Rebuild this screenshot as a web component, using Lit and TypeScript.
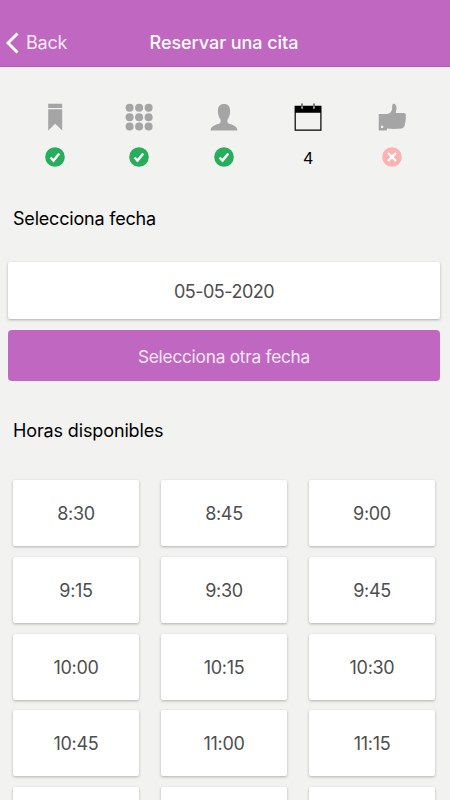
import { LitElement, html, css, svg } from "lit";
import { customElement } from "lit/decorators.js";

const ICONS = {
  bookmark: svg`<path d="M7.200 .8h14v4.300h-14z M7.200 6.300h14V27.500l-7-6.800-7 6.800z"/>`,
  grid: svg`${[4.8, 14.2, 23.6].map((y) => [4.6, 14.1, 23.6].map((x) => svg`<circle cx=${x} cy=${y} r="4"/>`))}`,
  person: svg`<path d="M14 .9c4 0 6.200 2.400 6.100 6.900 0 3.300-.8 6.200-2.400 8.500-.7 1.600-.5 3.700.8 4.300 2.500 1.200 8.500 1.800 9 6.900H.5c.5-5.100 6.500-5.700 9-6.900 1.300-.6 1.500-2.700.8-4.300C8.700 14 7.900 11.100 7.900 7.800 7.800 3.300 10 .9 14 .9z"/>`,
  calendar: svg`<path d="M.6 2.800h6.600v2.700h1.700V2.800h10.200v2.700h1.700V2.800h6.700v25H.6z M1.800 9.700v16.900h24.500V9.700z" fill-rule="evenodd"/><path d="M7.500.6h1v4h-1z M19.500.6h1v4h-1z"/>`,
  thumb: svg`<path fill-rule="evenodd" d="M.7 11h8.300c3-.3 4.900-2.400 5.100-5.200.1-2.500.1-5.100 1.500-5.100 1.900 0 3 2 2.900 4.600-.1 1.900-.7 3.100-.7 4.600h8c2.300 0 2.500 2.300 1.700 3.400.6 1.300.5 2.600 0 3.500.2 1.400.1 2.700-.6 3.500.1 3-1.200 5.200-3.500 5.300-5.300.4-10.200.4-14.400 0v1.900H.7z M3 22.800v2.200h2.200v-2.200z"/>`,
};

type IconName = keyof typeof ICONS;
type Status = "done" | "current" | "pending";

const STEPS: { icon: IconName; status: Status }[] = [
  { icon: "bookmark", status: "done" },
  { icon: "grid", status: "done" },
  { icon: "person", status: "done" },
  { icon: "calendar", status: "current" },
  { icon: "thumb", status: "pending" },
];

const HOURS = [
  "8:30", "8:45", "9:00",
  "9:15", "9:30", "9:45",
  "10:00", "10:15", "10:30",
  "10:45", "11:00", "11:15",
  "", "", "",
];

@customElement("app-root")
export class AppRoot extends LitElement {
  static styles = css`
    :host {
      display: flex;
      flex-direction: column;
      height: 800px;
      overflow: hidden;
      background: #f2f2f1;
      color: #000;
      font-family: Inter, "Liberation Sans", sans-serif;
      font-size: 18px;
      letter-spacing: -0.2px;
    }
    * { box-sizing: border-box; }
    .header {
      flex: none;
      height: 67px;
      padding: 19px 8px 0 6px;
      background: #c067c1;
      border-bottom: 1px solid #b85bbb;
      color: #fbeafb;
      display: grid;
      grid-template-columns: 1fr auto 1fr;
      align-items: center;
    }
    .back { display: flex; align-items: center; gap: 7px; }
    .chevron { width: 13px; height: 22px; fill: none; stroke: #fff; stroke-width: 3; }
    .title { color: #fff; font-weight: 500; font-size: 18px; letter-spacing: -0.05px; }
    .steps { flex: none; display: flex; height: 104px; padding: 36px 15.5px 0 13px; }
    .step { flex: 1; display: flex; flex-direction: column; align-items: center; gap: 16px; }
    .icon { width: 28px; height: 28px; fill: #a5a5a5; }
    .current .icon { fill: #000; }
    .mark { width: 20px; height: 20px; display: block; }
    .tick { fill: none; stroke: #fff; stroke-width: 2.4; }
    .number { height: 20px; line-height: 22px; font-size: 16px; }
    .heading { flex: none; margin: 0; padding-left: 13px; font-size: 18px; font-weight: 400; line-height: 24px; }
    .first { margin-top: 36px; }
    .second { margin-top: 38px; letter-spacing: -0.13px; }
    .card {
      display: flex;
      align-items: center;
      justify-content: center;
      padding-top: 1px;
      background: #fff;
      color: #4e4e4e;
      border-radius: 2px;
      box-shadow: 0 1px 3px rgba(0, 0, 0, 0.28);
    }
    .date { flex: none; margin: 31px 10px 0 8px; height: 57px; padding-top: 2px; letter-spacing: -0.5px; }
    .button {
      flex: none;
      margin: 11px 10px 0 8px;
      padding: 2px 0 0;
      height: 51px;
      border: 0;
      border-radius: 4px;
      background: #c067c1;
      color: #f9e6f9;
      font: inherit;
      font-size: 17.3px;
      letter-spacing: -0.25px;
    }
    .hours {
      margin: 37px 15px 0 13px;
      display: grid;
      grid-template-columns: repeat(3, 126px);
      justify-content: space-between;
      grid-auto-rows: 66px;
      row-gap: 10.8px;
      letter-spacing: -0.3px;
    }
  `;

  private mark(status: Status) {
    if (status === "current") return html`<span class="number">4</span>`;
    const done = status === "done";
    return html`<svg class="mark" viewBox="0 0 20 20">
      <circle cx="10" cy="10" r="9.8" fill=${done ? "#27ae5a" : "#fdb1b0"}></circle>
      <path class="tick" d=${done ? "M5.500 10.500l3 3.100 5.800-7" : "M6 6l8 8M14 6l-8 8"}></path>
    </svg>`;
  }

  render() {
    return html`
      <header class="header">
        <span class="back">
          <svg class="chevron" viewBox="0 0 13 22"><path d="M11.500 1.500L2 11l9.500 9.500"></path></svg>
          Back
        </span>
        <span class="title">Reservar una cita</span>
      </header>
      <nav class="steps">
        ${STEPS.map(
          (s) => html`<div class="step ${s.status}">
            <svg class="icon" viewBox="0 0 28 28">${ICONS[s.icon]}</svg>
            ${this.mark(s.status)}
          </div>`
        )}
      </nav>
      <h2 class="heading first">Selecciona fecha</h2>
      <div class="card date">05-05-2020</div>
      <button class="button">Selecciona otra fecha</button>
      <h2 class="heading second">Horas disponibles</h2>
      <div class="hours">${HOURS.map((h) => html`<div class="card">${h}</div>`)}</div>
    `;
  }
}
